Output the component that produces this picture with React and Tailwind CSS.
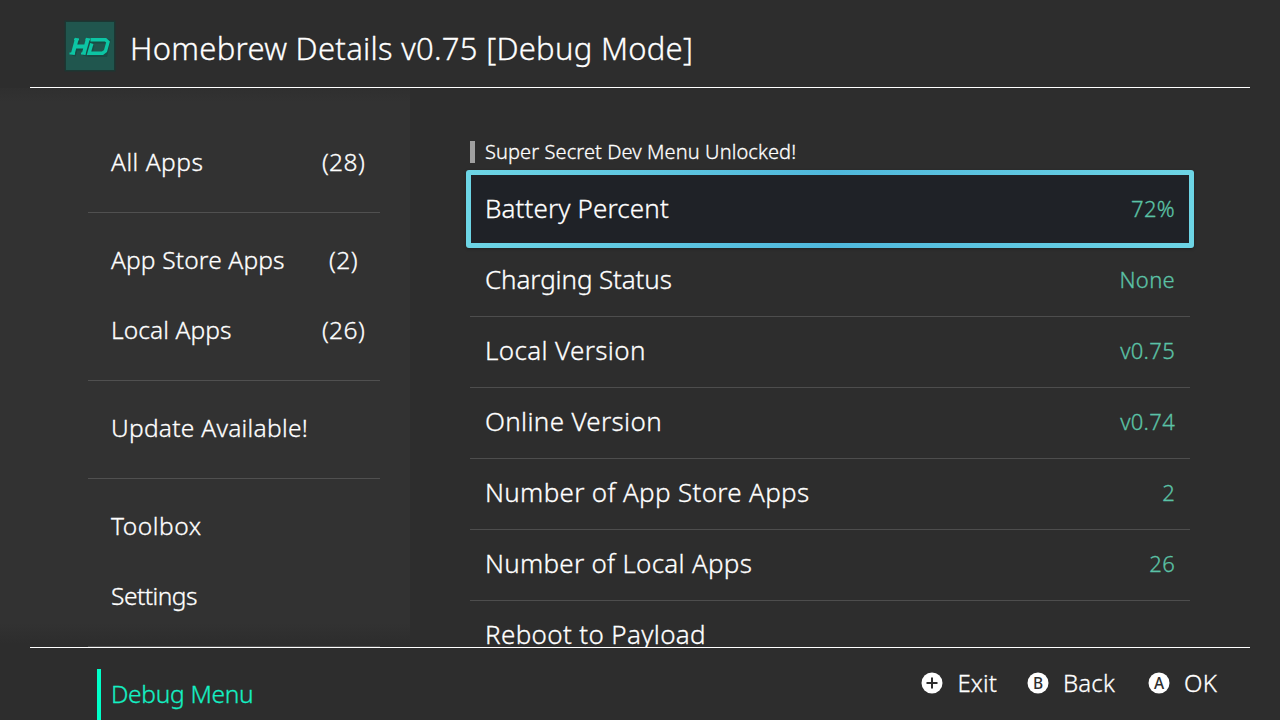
const FONT = 'font-["Noto_Sans","Open_Sans",sans-serif]';

function Logo() {
  return (
    <svg className="block h-[52px] w-[52px] shrink-0" viewBox="0 0 52 52">
      <rect x="0.5" y="0.5" width="51" height="51" fill="#1c3733" />
      <rect x="2" y="2" width="48" height="48" fill="#20564e" />
      <g transform="translate(1.4 2)" fill="none" stroke="#174a43" strokeWidth="4" opacity="0.8">
        <path d="M12.700 18.300 8.300 34M24 18.300 19.500 34M10.500 26.500H21" />
        <path d="M26 19.500H43L40 33H24.500L27 23.500" />
      </g>
      <g fill="none" stroke="#0cc5a4" strokeWidth="3.8">
        <path d="M13 18.300 8.600 34.500M24 18.300 19.500 34.500M10.500 26.500H21" />
        <path d="M10 19.300H15M21.500 19.300H26M5.500 33.500H11M17 33.500H21.500" strokeWidth="1.800" />
        <path d="M26.500 19.800H41.500L44 22 41.500 31 38.500 33.200H25L27.800 23.500" strokeWidth="3.400" />
      </g>
    </svg>
  );
}

function NavItem({ label, count, track }) {
  return (
    <div className="flex h-[70px] items-center pb-[2px] pl-[23px] text-[24.500px] leading-none text-white">
      <span className={`w-[197px] whitespace-nowrap ${track}`}>{label}</span>
      {count && <span className="w-[71px] text-center tracking-[0.4px]">{count}</span>}
    </div>
  );
}

function Divider() {
  return (
    <div className="flex h-7 items-center">
      <div className="h-px w-full bg-[#505050]" />
    </div>
  );
}

function Row({ label, value, track }) {
  return (
    <div className="flex h-[71px] shrink-0 items-center justify-between border-b border-[#4d4d4d] px-[15px] pb-[5px]">
      <span className={`whitespace-nowrap text-[26px] leading-none text-white ${track}`}>{label}</span>
      <span className="text-[22px] leading-none tracking-[0.3px] text-[#5bc2a6]">{value}</span>
    </div>
  );
}

function Hint({ glyph, label, track }) {
  return (
    <div className="flex items-center gap-[15px]">
      <svg className="h-[22px] w-[22px]" viewBox="0 0 22 22">
        <circle cx="11" cy="11" r="10.500" fill="#fff" />
        {glyph === "+" ? (
          <path d="M11 5.500V16.500M5.500 11H16.500" stroke="#2d2d2d" strokeWidth="2" />
        ) : (
          <text x="11" y="16.500" textAnchor="middle" fontSize="15.500" fontWeight="500" fill="#2d2d2d">{glyph}</text>
        )}
      </svg>
      <span className={`text-[24px] leading-none text-white ${track}`}>{label}</span>
    </div>
  );
}

export default function App() {
  return (
    <div className={`flex h-[720px] w-[1280px] flex-col overflow-hidden bg-[#2d2d2d] font-light [-webkit-text-stroke:0.3px] ${FONT}`}>
      <header className="mx-[30px] flex h-[88px] shrink-0 items-center gap-[14px] border-b border-white pl-[34px] pt-1">
        <Logo />
        <h1 className="whitespace-nowrap pt-[5px] text-[31px] font-light leading-none tracking-[0.28px] text-white">Homebrew Details v0.75 [Debug Mode]</h1>
      </header>
      <div className="flex h-[559px] shrink-0 overflow-hidden">
        <nav className="w-[410px] shrink-0 bg-[linear-gradient(to_bottom,#2f2f2f_0px,#323232_14px,#323232_535px,#2d2d2d_556px)] pl-[88px] pr-[30px] pt-10">
          <NavItem label="All Apps" count="(28)" track="tracking-[0.5px]" />
          <Divider />
          <NavItem label="App Store Apps" count="(2)" track="tracking-[0.15px]" />
          <NavItem label="Local Apps" count="(26)" track="tracking-[0.1px]" />
          <Divider />
          <NavItem label="Update Available!" track="tracking-[0.27px]" />
          <Divider />
          <NavItem label="Toolbox" track="tracking-[0.55px]" />
          <NavItem label="Settings" track="tracking-[-0.5px]" />
          <Divider />
        </nav>
        <main className="flex w-[780px] shrink-0 flex-col pl-[60px] pt-[53px]">
          <div className="flex h-[22px] shrink-0 items-center gap-[10px]">
            <div className="h-[22px] w-[5px] bg-[#a0a0a0]" />
            <span className="whitespace-nowrap text-[20px] leading-none tracking-[0.1px] text-white">Super Secret Dev Menu Unlocked!</span>
          </div>
          <div className="-mx-1 -mb-[2px] mt-[7px] h-[78px] shrink-0 rounded-[3px] bg-linear-to-r from-[#6dd5e5] via-[#4fb8dc] to-[#6dd5e5] p-[5px] shadow-[0_1px_3px_rgba(0,0,0,0.3)]">
            <div className="flex h-full items-center justify-between bg-[#1f2227] pb-[3px] pl-[14px] pr-[14px]">
              <span className="text-[26px] leading-none tracking-[0.12px] text-white">Battery Percent</span>
              <span className="text-[22px] leading-none tracking-[0.3px] text-[#5bc2a6]">72%</span>
            </div>
          </div>
          <Row label="Charging Status" value="None" track="tracking-[-0.12px]" />
          <Row label="Local Version" value="v0.75" track="tracking-[0.36px]" />
          <Row label="Online Version" value="v0.74" track="tracking-[0.32px]" />
          <Row label="Number of App Store Apps" value="2" track="tracking-[0.32px]" />
          <Row label="Number of Local Apps" value="26" track="tracking-[0.27px]" />
          <Row label="Reboot to Payload" value="" track="tracking-[0.35px]" />
        </main>
      </div>
      <footer className="mx-[30px] flex h-[73px] shrink-0 justify-between border-t border-white">
        <div className="ml-[67px] mt-[21px] h-[51px] border-l-4 border-[#00ffc8] pl-[10px] pt-[13px] text-[24.500px] leading-none tracking-[-0.3px] text-[#14f0c4]">
          Debug Menu
        </div>
        <div className="flex h-[70px] items-center gap-[30px] pr-8">
          <Hint glyph="+" label="Exit" track="-ml-px tracking-[0.1px]" />
          <Hint glyph="B" label="Back" track="-ml-px pr-[3px] tracking-[0.2px]" />
          <Hint glyph="A" label="OK" track="-ml-px pr-px tracking-[0.2px]" />
        </div>
      </footer>
    </div>
  );
}
